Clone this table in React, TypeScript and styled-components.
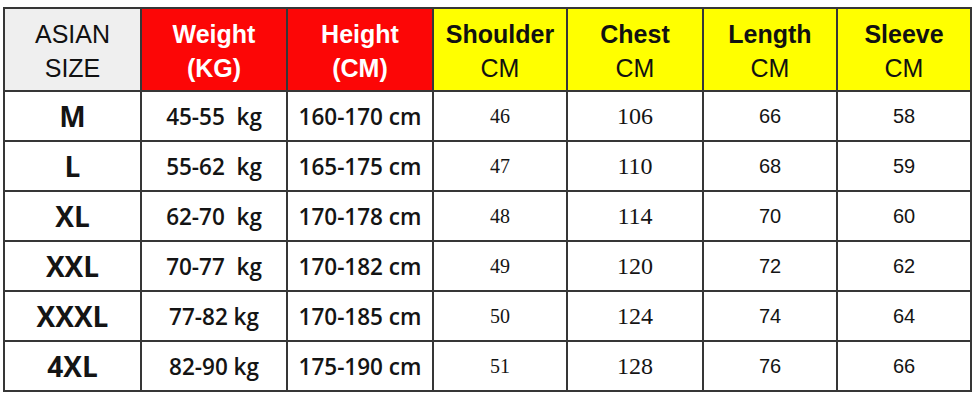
import React from "react";
import styled, { createGlobalStyle } from "styled-components";

const GlobalStyle = createGlobalStyle`
    html, body {
        margin: 0;
        padding: 0;
        background: #ffffff;
    }
    body {
        font-family: "Liberation Sans", Arial, sans-serif;
    }
`;

const Page = styled.div`
    width: 975px;
    height: 404px;
    padding: 7px 0 0 3px;
    box-sizing: border-box;
    background: #ffffff;
`;

const Grid = styled.div`
    display: grid;
    grid-template-columns: 135px 144px 144px 132px 134px 132px 132px;
    grid-template-rows: 81px repeat(6, 48px);
    gap: 2px;
    padding: 2px;
    width: max-content;
    background: #363636;
`;

type Tone = "gray" | "red" | "yellow";

const headBg: Record<Tone, string> = {
    gray: "#efefef",
    red: "#fc0606",
    yellow: "#ffff00",
};

const HeadCell = styled.div<{ $tone: Tone }>`
    background: ${(p) => headBg[p.$tone]};
    color: ${(p) => (p.$tone === "red" ? "#ffffff" : "#111111")};
    display: flex;
    flex-direction: column;
    align-items: center;
    justify-content: center;
    padding-top: 3px;
    box-sizing: border-box;
    font-family: "Liberation Sans", Arial, sans-serif;
    font-size: 25px;
    line-height: 34px;
`;

const HeadLine = styled.span<{ $bold?: boolean }>`
    font-weight: ${(p) => (p.$bold ? 700 : 400)};
    white-space: nowrap;
`;

type Kind = "size" | "range" | "serifSmall" | "serifLarge" | "sans";

const Cell = styled.div<{ $kind: Kind }>`
    background: #ffffff;
    color: #141414;
    display: flex;
    align-items: center;
    justify-content: center;
    white-space: pre;
    ${(p) => {
        switch (p.$kind) {
            case "size":
                return `font-family: "Open Sans", "Noto Sans", sans-serif; font-weight: 700; font-size: 28px;`;
            case "range":
                return `font-family: "Open Sans", "Noto Sans", sans-serif; font-weight: 600; font-size: 22.5px;`;
            case "serifSmall":
                return `font-family: "Liberation Serif", "Times New Roman", serif; font-size: 20px;`;
            case "serifLarge":
                return `font-family: "Liberation Serif", "Times New Roman", serif; font-size: 24px;`;
            default:
                return `font-family: "Liberation Sans Narrow", "Liberation Sans", Arial, sans-serif; font-size: 20px;`;
        }
    }}
`;

const headers: { tone: Tone; top: string; bottom: string; boldTop: boolean; boldBottom: boolean }[] = [
    { tone: "gray", top: "ASIAN", bottom: "SIZE", boldTop: false, boldBottom: false },
    { tone: "red", top: "Weight", bottom: "(KG)", boldTop: true, boldBottom: true },
    { tone: "red", top: "Height", bottom: "(CM)", boldTop: true, boldBottom: true },
    { tone: "yellow", top: "Shoulder", bottom: "CM", boldTop: true, boldBottom: false },
    { tone: "yellow", top: "Chest", bottom: "CM", boldTop: true, boldBottom: false },
    { tone: "yellow", top: "Length", bottom: "CM", boldTop: true, boldBottom: false },
    { tone: "yellow", top: "Sleeve", bottom: "CM", boldTop: true, boldBottom: false },
];

const rows = [
    ["M", "45-55  kg", "160-170 cm", "46", "106", "66", "58"],
    ["L", "55-62  kg", "165-175 cm", "47", "110", "68", "59"],
    ["XL", "62-70  kg", "170-178 cm", "48", "114", "70", "60"],
    ["XXL", "70-77  kg", "170-182 cm", "49", "120", "72", "62"],
    ["XXXL", "77-82 kg", "170-185 cm", "50", "124", "74", "64"],
    ["4XL", "82-90 kg", "175-190 cm", "51", "128", "76", "66"],
];

const kinds: Kind[] = ["size", "range", "range", "serifSmall", "serifLarge", "sans", "sans"];

export default function App() {
    return (
        <>
            <GlobalStyle />
            <Page>
                <Grid>
                    {headers.map((h) => (
                        <HeadCell key={h.top} $tone={h.tone}>
                            <HeadLine $bold={h.boldTop}>{h.top}</HeadLine>
                            <HeadLine $bold={h.boldBottom}>{h.bottom}</HeadLine>
                        </HeadCell>
                    ))}
                    {rows.map((row) =>
                        row.map((value, i) => (
                            <Cell key={row[0] + i} $kind={kinds[i]}>
                                {value}
                            </Cell>
                        ))
                    )}
                </Grid>
            </Page>
        </>
    );
}
